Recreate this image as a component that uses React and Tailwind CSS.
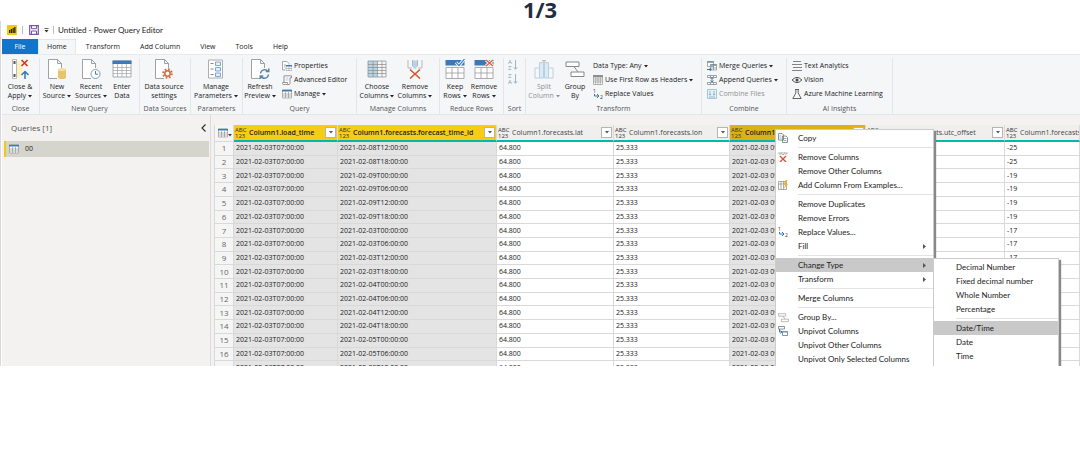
import clsx from 'clsx'

const TABS = ['Home', 'Transform', 'Add Column', 'View', 'Tools', 'Help']

const COLUMNS = [
  { name: 'Column1.load_time', width: 'w-[104px]', selected: true },
  { name: 'Column1.forecasts.forecast_time_id', width: 'w-[159px]', selected: true },
  { name: 'Column1.forecasts.lat', width: 'w-[117px]' },
  { name: 'Column1.forecasts.lon', width: 'w-[116px]' },
  { name: 'Column1.forecasts.local_time', width: 'w-[136px]', selected: true, active: true },
  { name: 'Column1.forecasts.utc_offset', width: 'w-[139px]' },
  { name: 'Column1.forecasts.temperature', width: '' },
]

const FORECASTS = [
  ['02-08T12', -25], ['02-08T18', -25], ['02-09T00', -19], ['02-09T06', -19],
  ['02-09T12', -19], ['02-09T18', -19], ['02-03T00', -17], ['02-03T06', -17],
  ['02-03T12', -17], ['02-03T18', -17], ['02-04T00', -16], ['02-04T06', -16],
  ['02-04T12', -16], ['02-04T18', -16], ['02-05T00', -15], ['02-05T06', -15],
  ['02-05T12', -15],
]

const ROWS = FORECASTS.map(([id, temp]) => [
  '2021-02-03T07:00:00', `2021-${id}:00:00`, '64.800', '25.333', '2021-02-03 09:00:00', '', temp,
])

const TYPES = ['Decimal Number', 'Fixed decimal number', 'Whole Number', 'Percentage', null, 'Date/Time', 'Date', 'Time', 'Date/Time/Timezone']

/* ---------- icons ---------- */

function Icon({ size = 10, children, className }) {
  return (
    <svg
      viewBox={`0 0 ${size} ${size}`}
      width={size}
      height={size}
      fill="none"
      className={clsx('shrink-0', className)}
      aria-hidden="true"
    >
      {children}
    </svg>
  )
}

const PAGE = 'M10 19.5H1.5V.5h9l4 4V9M10.5.5v4h4'

const CloseApplyIcon = () => (
  <Icon size={20}>
    <path d="M2.500.5h4v19h-4z" fill="#fff" stroke="#aaa" strokeWidth=".8" />
    <path d="M3.500 2h2v3h-2zM3.500 15h2v3h-2z" fill="#555" />
    <path d="M7 1l5 3v12l-5 3z" fill="#fbf0c0" />
    <path d="M11.500 1l6 6M17.500 1l-6 6" stroke="#d13b1c" strokeWidth="1.700" />
    <path d="M15 20v-7.500M11.500 16L15 12.500l3.500 3.500" stroke="#3a76b5" strokeWidth="1.500" />
  </Icon>
)
const NewSourceIcon = () => (
  <Icon size={20}>
    <path d={PAGE} fill="#fff" stroke="#8a8a8a" strokeWidth=".8" />
    <path d="M11 10.500v8c0 2 8 2 8 0v-8z" fill="#e6c36c" />
    <ellipse cx="15" cy="10.500" rx="4" ry="1.500" fill="#f3dda0" />
  </Icon>
)
const RecentIcon = () => (
  <Icon size={20}>
    <path d={PAGE} fill="#fff" stroke="#8a8a8a" strokeWidth=".8" />
    <circle cx="14.500" cy="15" r="4.500" fill="#fff" stroke="#7ba0bf" />
    <path d="M14.500 12v3.200h2.500" stroke="#4d7ca5" />
  </Icon>
)
const EnterDataIcon = () => (
  <Icon size={20}>
    <path d="M1 2h18v16H1z" fill="#fff" stroke="#999" strokeWidth=".8" />
    <path d="M.5 1.500h19v3.500H.5z" fill="#3f78b5" />
    <path d="M1 8.500h18M1 11.500h18M1 14.500h18M5.500 5v13M10 5v13M14.500 5v13" stroke="#aaa" strokeWidth=".8" />
  </Icon>
)
const SettingsIcon = () => (
  <Icon size={20}>
    <path d={PAGE} fill="#fff" stroke="#8a8a8a" strokeWidth=".8" />
    <circle cx="13.500" cy="14.500" r="4.300" stroke="#d5693b" strokeWidth="2" strokeDasharray="1.700 1.677" />
    <circle cx="13.500" cy="14.500" r="2.700" fill="#fff" stroke="#d5693b" strokeWidth="1.500" />
  </Icon>
)
const ParametersIcon = () => (
  <Icon size={20}>
    <path d="M2.500 1h14v18h-14z" fill="#fff" stroke="#999" strokeWidth=".8" />
    <path d="M9.500 3h5v3.500h-5zM9.500 8.500h5V12h-5zM9.500 14h5v3.500h-5z" fill="#e3effb" stroke="#6294c6" strokeWidth=".8" />
    <path d="M4.500 4.500h3M4.500 10h3M4.500 15.500h3" stroke="#888" />
  </Icon>
)
const RefreshIcon = () => (
  <Icon size={20}>
    <path d={PAGE} fill="#fff" stroke="#8a8a8a" strokeWidth=".8" />
    <path d="M10.500 14.500c.5-4 5.500-5 7.500-2M18.800 9.500v3h-3M18.500 15.500c-.5 4-5.500 5-7.500 2M10.200 20v-3h3" stroke="#5b87a6" strokeWidth="1.500" />
  </Icon>
)
const ChooseColumnsIcon = () => (
  <Icon size={20}>
    <path d="M1 2h9v16H1z" fill="#b5d6ea" />
    <path d="M1 2h18v16H1zM1 5.500h18M1 8.500h18M1 11.500h18M1 14.500h18M6 2v16M10.500 2v16M15 2v16" stroke="#8a8a8a" strokeWidth=".7" />
  </Icon>
)
const RemoveColumnsIcon = () => (
  <Icon size={20}>
    <path d="M7.500 1.500h5v6l-2.500 3-2.500-3z" fill="#b5d6ea" />
    <path d="M3 1v8h4M17 1v8h-4M7.500 1v6M12.500 1v6" stroke="#aaa" strokeWidth=".8" />
    <path d="M5 10.500l10 9M15 10.500l-10 9" stroke="#d9532c" strokeWidth="1.500" />
  </Icon>
)
const RowsGrid = () => (
  <>
    <path d="M1 8.500h18v11H1zM1 14h18M7 8.500v11M13 8.500v11" stroke="#999" fill="#fff" strokeWidth=".8" />
    <path d="M.5 1h19v5.500H.5z" fill="#3f78b5" />
  </>
)
const KeepRowsIcon = () => (
  <Icon size={20}>
    <RowsGrid />
    <path d="M11 3.500l3 3L19.500 0" stroke="#fff" strokeWidth="3" />
    <path d="M11 3.500l3 3L19.500 0" stroke="#5082ae" strokeWidth="1.200" />
  </Icon>
)
const RemoveRowsIcon = () => (
  <Icon size={20}>
    <RowsGrid />
    <path d="M12 1l7 6M19 1l-7 6" stroke="#fff" strokeWidth="3" />
    <path d="M12 1l7 6M19 1l-7 6" stroke="#d9663f" strokeWidth="1.500" />
  </Icon>
)
const SplitIcon = () => (
  <Icon size={20}>
    <path d="M1 9h4.500v10H1zM14.500 9H19v10h-4.500z" stroke="#b4cddf" fill="#f4f8fb" strokeWidth=".9" />
    <path d="M5.500 3.500H9.500V19h-4zM10.500 3.500h4V19h-4z" stroke="#b4cddf" fill="#dbeaf4" strokeWidth=".9" />
    <path d="M8.500 1L10 2.500 11.500 1" stroke="#888" />
  </Icon>
)
const GroupIcon = ({ size = 20 }) => (
  <svg viewBox="0 0 20 20" width={size} height={size} fill="#fff" className="shrink-0" aria-hidden="true">
    <path d="M1 3h13v4.500H1zM6 13h13v4.500H6z" stroke="#888" />
    <path d="M9 7.500l4 5.500" stroke="#888" />
  </svg>
)
const PowerBiIcon = () => (
  <Icon>
    <path d="M0 0h10v10H0z" fill="#f2c811" />
    <path d="M2 5h1.300v3H2zM3.800 4h1.300v4H3.800zM5.600 3h1.200v5H5.600zM7.200 2h1.300v6H7.200z" fill="#222" />
  </Icon>
)
const SaveIcon = () => (
  <Icon>
    <path d="M.7.7h8.600v8.600H.7z" fill="#fff" stroke="#7b4fa3" strokeWidth="1.200" />
    <path d="M2.500.7h5v3h-5zM2.500 6h5v3.300h-5z" fill="#fff" stroke="#7b4fa3" />
  </Icon>
)
const PropertiesIcon = () => (
  <Icon>
    <path d="M3 9H.5V.5H5l2 2v1" fill="#fff" stroke="#888" strokeWidth=".7" />
    <path d="M2 4h2M2 6h1" stroke="#888" strokeWidth=".7" />
    <path d="M4 4.500h6v5H4z" fill="#fff" stroke="#999" strokeWidth=".6" />
    <path d="M4 4h6v1.500H4z" fill="#3f78b5" />
    <path d="M4 7.500h6M7 5.500v4" stroke="#999" strokeWidth=".6" />
  </Icon>
)
const ScriptIcon = () => (
  <Icon>
    <path d="M2 7V.8h7.500v2H8v5.500c0 1.300-1 1.300-1.500 1.300H1.300C.3 9.600.3 7.500.8 7.500h4.700c0 1 .3 2 1 2" fill="#fff" stroke="#777" strokeWidth=".8" />
    <path d="M3.500 3h3M3.500 5h3" stroke="#aaa" strokeWidth=".7" />
  </Icon>
)
const TableIcon = () => (
  <Icon>
    <path d="M.5 1h9v8h-9zM.5 5h9M.5 7h9M3.500 3v6M6.500 3v6" fill="#fff" stroke="#888" strokeWidth=".6" />
    <path d="M0 .8h10v1.700H0z" fill="#3f78b5" />
  </Icon>
)
const HeadersIcon = () => (
  <Icon>
    <path d="M.5.5h9v9h-9zM.5 3h9M.5 5h9M.5 7h9M2.700.5v9M5 .5v9M7.300.5v9" fill="#fff" stroke="#888" strokeWidth=".6" />
    <path d="M0 0h10v2H0z" fill="#8a8f94" />
  </Icon>
)
const ReplaceIcon = () => (
  <Icon>
    <text x="0" y="4" fontSize="5" fill="#333" fontFamily="Open Sans">1</text>
    <text x="7" y="10" fontSize="5" fill="#333" fontFamily="Open Sans">2</text>
    <path d="M1.500 5v2h4M4 5l2 2-2 2" stroke="#3a76b5" />
  </Icon>
)
const MergeIcon = () => (
  <Icon>
    <path d="M.5.5h6v5h-6zM3.500 3.500h6v5.500h-6zM3.500 7h6M6.500 5v4" fill="#fff" stroke="#888" strokeWidth=".7" />
    <path d="M.2.2h6.500v1.500H.2zM3.200 3.200h6.500v1.500H3.200z" fill="#6f8fae" />
    <path d="M0 8.500h4M2.700 7l1.500 1.500L2.700 10" stroke="#2f79c4" />
  </Icon>
)
const AppendIcon = () => (
  <Icon>
    <path d="M.5.5h9v2h-9zM.5 7.500h9v2h-9zM3.500.5v2M6.500.5v2M3.500 7.500v2M6.500 7.500v2" fill="#fff" stroke="#888" strokeWidth=".8" />
    <path d="M5 2v5M3.500 4L5 2.500 6.500 4M3.500 5.500L5 7l1.500-1.500" stroke="#3a76b5" strokeWidth=".9" />
  </Icon>
)
const CombineIcon = () => (
  <Icon>
    <path d="M.5.5h9v9h-9z" fill="#e6f1f8" stroke="#9bbfd4" strokeWidth=".9" />
    <path d="M3 2v4M2 5l1 1.300L4 5M7 2v4M6 5l1 1.300L8 5M2 8h6" stroke="#7fa9c2" strokeWidth=".8" />
  </Icon>
)
const TextIcon = () => (
  <Icon>
    <path d="M1 .5h8M0 3.500h10M1 6.500h9M0 9.500h10" stroke="#777" strokeWidth=".9" />
  </Icon>
)
const EyeIcon = () => (
  <Icon>
    <path d="M.3 5c2.500-3.300 6.900-3.300 9.400 0-2.500 3.300-6.900 3.300-9.400 0z" stroke="#444" />
    <circle cx="5" cy="5" r="1.500" fill="#444" />
  </Icon>
)
const FlaskIcon = () => (
  <Icon>
    <path d="M3 .5h4M3.800.5v3.500L.8 9.500h8.400L6.200 4V.5" stroke="#555" strokeWidth=".9" />
  </Icon>
)
const SortIcon = ({ top, bottom }) => (
  <Icon size={12}>
    <text x="0" y="5" fontSize="6" fill="#7d9cb0" fontFamily="Open Sans">{top}</text>
    <text x="0" y="11" fontSize="6" fill="#7d9cb0" fontFamily="Open Sans">{bottom}</text>
    <path d="M7.500 1v9M5.800 8.300l1.700 2 1.700-2" stroke="#8fb0c4" strokeWidth=".9" />
  </Icon>
)
const CopyIcon = () => (
  <Icon>
    <path d="M.5.5h3.500l1.500 1.500v5h-5zM4.500 3H8l1.500 1.500v5h-5z" fill="#fff" stroke="#777" strokeWidth=".8" />
    <path d="M5.500 5.500h3M5.500 7.500h3M1.500 3h2M1.500 5h2" stroke="#5d93c0" strokeWidth=".7" />
  </Icon>
)
const MenuRemoveIcon = () => (
  <Icon>
    <path d="M1 0v2h2V0M4 0v2.500h2V0M7 0v2h2V0" stroke="#999" strokeWidth=".7" />
    <path d="M2 4l6 6M8 4l-6 6" stroke="#d9532c" strokeWidth="1.400" />
  </Icon>
)
const ExamplesIcon = () => (
  <Icon>
    <path d="M.5 1.500h8v8h-8zM.5 4h8M3 1.500v8M5.500 1.500v8" fill="#fff" stroke="#888" strokeWidth=".7" />
    <path d="M7.500 0L5 5h2L6 9l4-5H8l1.500-4z" fill="#e8b54a" />
  </Icon>
)
const UnpivotIcon = () => (
  <Icon>
    <path d="M.5.5h6v2.500h-6zM4.500 5.500h5v4h-5z" fill="#fff" stroke="#777" strokeWidth=".8" />
    <path d="M4.200 5h5.600v1.500H4.200z" fill="#6b9ac6" />
    <path d="M1.500 3v3h2M2.500 4.500L4 6 2.500 7.500" stroke="#2f79c4" />
  </Icon>
)

const Caret = () => (
  <svg viewBox="0 0 4 3" width="4" height="3" className="ml-0.5 inline-block align-middle" aria-hidden="true">
    <path d="M0 0h4L2 2.500z" fill="currentColor" />
  </svg>
)

/* ---------- ribbon ---------- */

function BigButton({ icon: I, lines, caret, width, disabled }) {
  return (
    <button
      disabled={disabled}
      className={clsx('flex shrink-0 flex-col items-center whitespace-nowrap leading-[9px]', width, disabled && 'text-[#929292]')}
    >
      <I />
      <span className="mt-[3px]">{lines[0]}</span>
      <span>
        {lines[1]}
        {caret && <Caret />}
      </span>
    </button>
  )
}

function SmallButton({ icon: I, label, caret, disabled }) {
  return (
    <button
      disabled={disabled}
      className={clsx('flex h-[14px] items-center whitespace-nowrap', disabled && 'text-[#929292]')}
    >
      {I && <span className="mr-0.5"><I /></span>}
      {label}
      {caret && <Caret />}
    </button>
  )
}

function Group({ label, width, children }) {
  return (
    <div className={clsx('flex shrink-0 flex-col border-r border-[#e3e5e8]', width)}>
      <div className="flex flex-1 pt-px">{children}</div>
      <p className="whitespace-nowrap text-center leading-[10px] text-[#555]">{label}</p>
    </div>
  )
}

function SmallList({ children }) {
  return <div className="flex flex-col items-start pl-[5px]">{children}</div>
}

function Ribbon() {
  return (
    <div className="flex h-[61px] border-y border-t-[#e9e9e9] border-b-[#dfe8ea] bg-[#f4f6f8] pt-[3px]">
      <Group label="Close" width="w-[38px]">
        <BigButton icon={CloseApplyIcon} lines={['Close &', 'Apply']} caret width="w-[36px]" />
      </Group>
      <Group label="New Query" width="w-[100px]">
        <BigButton icon={NewSourceIcon} lines={['New', 'Source']} caret width="w-[34px]" />
        <BigButton icon={RecentIcon} lines={['Recent', 'Sources']} caret width="w-[34px]" />
        <BigButton icon={EnterDataIcon} lines={['Enter', 'Data']} width="w-[28px]" />
      </Group>
      <Group label="Data Sources" width="w-[51px]">
        <BigButton icon={SettingsIcon} lines={['Data source', 'settings']} width="w-[48px]" />
      </Group>
      <Group label="Parameters" width="w-[52px]">
        <BigButton icon={ParametersIcon} lines={['Manage', 'Parameters']} caret width="w-[50px]" />
      </Group>
      <Group label="Query" width="w-[114px]">
        <BigButton icon={RefreshIcon} lines={['Refresh', 'Preview']} caret width="w-[34px]" />
        <SmallList>
          <SmallButton icon={PropertiesIcon} label="Properties" />
          <SmallButton icon={ScriptIcon} label="Advanced Editor" />
          <SmallButton icon={TableIcon} label="Manage" caret />
        </SmallList>
      </Group>
      <Group label="Manage Columns" width="w-[83px]">
        <BigButton icon={ChooseColumnsIcon} lines={['Choose', 'Columns']} caret width="w-[40px]" />
        <BigButton icon={RemoveColumnsIcon} lines={['Remove', 'Columns']} caret width="w-[36px]" />
      </Group>
      <Group label="Reduce Rows" width="w-[64px]">
        <BigButton icon={KeepRowsIcon} lines={['Keep', 'Rows']} caret width="w-[30px]" />
        <BigButton icon={RemoveRowsIcon} lines={['Remove', 'Rows']} caret width="w-[28px]" />
      </Group>
      <Group label="Sort" width="w-[22px]">
        <div className="flex flex-col gap-0.5 pl-1">
          <button disabled aria-label="Sort ascending"><SortIcon top="A" bottom="Z" /></button>
          <button disabled aria-label="Sort descending"><SortIcon top="Z" bottom="A" /></button>
        </div>
      </Group>
      <Group label="Transform" width="w-[176px]">
        <BigButton icon={SplitIcon} lines={['Split', 'Column']} caret disabled width="w-[36px]" />
        <BigButton icon={GroupIcon} lines={['Group', 'By']} width="w-[26px]" />
        <SmallList>
          <SmallButton label="Data Type: Any" caret />
          <SmallButton icon={HeadersIcon} label="Use First Row as Headers" caret />
          <SmallButton icon={ReplaceIcon} label="Replace Values" />
        </SmallList>
      </Group>
      <Group label="Combine" width="w-[85px]">
        <SmallList>
          <SmallButton icon={MergeIcon} label="Merge Queries" caret />
          <SmallButton icon={AppendIcon} label="Append Queries" caret />
          <SmallButton icon={CombineIcon} label="Combine Files" disabled />
        </SmallList>
      </Group>
      <Group label="AI Insights" width="w-[106px]">
        <SmallList>
          <SmallButton icon={TextIcon} label="Text Analytics" />
          <SmallButton icon={EyeIcon} label="Vision" />
          <SmallButton icon={FlaskIcon} label="Azure Machine Learning" />
        </SmallList>
      </Group>
    </div>
  )
}

/* ---------- data grid ---------- */

function HeaderCell({ col }) {
  return (
    <th
      className={clsx(
        'h-[17px] overflow-hidden border-r border-b-2 border-r-[#d9d9d9] border-b-[#01b8aa] p-0 text-left',
        col.width,
        col.active ? 'bg-[#dbb116]' : col.selected ? 'bg-[#f6cc14]' : 'bg-[#f0efee]',
        col.selected ? 'font-semibold text-[#222]' : 'font-normal text-[#444]'
      )}
    >
      <div className="flex items-center pr-px pl-px">
        <span className="w-[14px] shrink-0 text-[6px] leading-[6px] font-normal text-[#333]">
          ABC<br />123
        </span>
        <span className="flex-1 whitespace-nowrap">{col.name}</span>
        <button aria-label={`Filter ${col.name}`} className="flex h-[11px] w-[11px] items-center justify-center border border-[#b5b5b5] bg-white">
          <svg viewBox="0 0 4 3" width="4" height="3"><path d="M0 0h4L2 2.500z" fill="#555" /></svg>
        </button>
      </div>
    </th>
  )
}

function DataGrid() {
  return (
    <table className="h-[250px] w-full table-fixed border-separate border-spacing-0 border-l border-[#d9d9d9]">
      <thead>
        <tr>
          <th className="h-[17px] w-[19px] border-r border-b border-[#d9d9d9] bg-[#f5f5f5] p-0">
            <button aria-label="Table options" className="flex items-center pl-[3px]">
              <TableIcon />
              <svg viewBox="0 0 4 3" width="4" height="3" className="mt-1"><path d="M0 0h4L2 2.500z" fill="#444" /></svg>
            </button>
          </th>
          {COLUMNS.map((col) => <HeaderCell key={col.name} col={col} />)}
        </tr>
      </thead>
      <tbody>
        {ROWS.map((row, i) => (
          <tr key={i}>
            <td className="border-r border-b border-[#d9d9d9] bg-[#f5f5f5] p-0 text-center text-[8px] leading-[10px] text-[#666]">{i + 1}</td>
            {row.map((value, c) => (
              <td
                key={c}
                className={clsx(
                  'border-r border-b border-[#d9d9d9] p-0 pl-0.5 leading-[10px] whitespace-nowrap text-[#222]',
                  COLUMNS[c].selected ? 'bg-[#e4e4e4]' : 'bg-white'
                )}
              >
                {value}
              </td>
            ))}
          </tr>
        ))}
      </tbody>
    </table>
  )
}

/* ---------- context menu ---------- */

function MenuItem({ icon: I, label, arrow, active, children }) {
  return (
    <li className="relative">
      <button className={clsx('flex h-[14px] w-full items-center whitespace-nowrap', active && 'bg-[#c9c9c9]')}>
        <span className="w-[22px] shrink-0 pl-0.5">{I && <I />}</span>
        <span className="flex-1 text-left">{label}</span>
        {arrow && (
          <svg viewBox="0 0 3 5" width="3" height="5" className="mr-[7px]"><path d="M0 0l3 2.500L0 5z" fill="#555" /></svg>
        )}
      </button>
      {children}
    </li>
  )
}

const Separator = () => <li className="my-0.5 ml-[22px] h-px bg-[#e3e3e3]" role="separator" />

function TypeMenu() {
  return (
    <ul className="absolute top-0 left-full w-[126px] border border-[#ccc] bg-white pt-px pb-1 shadow-[2px_2px_1px_#888]">
      {TYPES.map((type, i) =>
        type ? <MenuItem key={type} label={type} active={type === 'Date/Time'} /> : <Separator key={i} />
      )}
    </ul>
  )
}

function ContextMenu() {
  return (
    <ul className="absolute top-[14px] left-[564px] w-[159px] border border-[#ccc] bg-white pt-px font-['Lato','Open_Sans',sans-serif] text-[8px] text-[#222] shadow-[2px_2px_1px_#888]">
      <MenuItem icon={CopyIcon} label="Copy" />
      <Separator />
      <MenuItem icon={MenuRemoveIcon} label="Remove Columns" />
      <MenuItem label="Remove Other Columns" />
      <MenuItem icon={ExamplesIcon} label="Add Column From Examples..." />
      <Separator />
      <MenuItem label="Remove Duplicates" />
      <MenuItem label="Remove Errors" />
      <MenuItem icon={ReplaceIcon} label="Replace Values..." />
      <MenuItem label="Fill" arrow />
      <Separator />
      <MenuItem label="Change Type" arrow active>
        <TypeMenu />
      </MenuItem>
      <MenuItem label="Transform" arrow />
      <Separator />
      <MenuItem label="Merge Columns" />
      <Separator />
      <MenuItem icon={() => <GroupIcon size={11} />} label="Group By..." />
      <MenuItem icon={UnpivotIcon} label="Unpivot Columns" />
      <MenuItem label="Unpivot Other Columns" />
      <MenuItem label="Unpivot Only Selected Columns" />
      <Separator />
    </ul>
  )
}

export default function App() {
  return (
    <main className="bg-white font-['Open_Sans','Noto_Sans',sans-serif]">
      <h1 className="h-[21px] text-center text-[22px] leading-[18px] font-bold text-[#232c40]">1/3</h1>

      <section className="flex aspect-[1080/345] flex-col overflow-hidden border-l border-[#d8d8dc] pl-px text-[7px] leading-[10px] text-[#222]">
        {/* Title bar */}
        <header className="flex h-[18px] shrink-0 items-center pl-[5px]">
          <PowerBiIcon />
          <span className="mx-[5px] h-2 w-px bg-[#bbb]" />
          <button aria-label="Save" className="ml-px"><SaveIcon /></button>
          <button aria-label="Customize toolbar" className="ml-[5px]">
            <svg viewBox="0 0 5 5" width="5" height="5"><path d="M.5 0h4v.8h-4zM.5 2h4l-2 2.500z" fill="#333" /></svg>
          </button>
          <span className="mx-1 h-2 w-px bg-[#bbb]" />
          <span className="font-['Lato','Open_Sans',sans-serif] text-[8px]">Untitled - Power Query Editor</span>
        </header>

        {/* Tabs */}
        <nav className="flex h-[15px] shrink-0">
          <button className="w-9 bg-[#1374cc] text-white">File</button>
          {TABS.map((tab) => (
            <button
              key={tab}
              className={tab === 'Home' ? 'border-x border-t border-[#e3e5e8] bg-[#f4f6f8] px-2' : 'px-2.5'}
            >
              {tab}
            </button>
          ))}
        </nav>
        <Ribbon />

        {/* Workspace */}
        <div className="flex min-h-0 flex-1 bg-[#f3f2f1]">
          <aside className="w-[209px] shrink-0 border-r border-[#dcdcdc]">
            <div className="flex h-[26px] items-center justify-between pr-1 pl-[9px]">
              <h2 className="text-[8px] text-[#555]">Queries [1]</h2>
              <button aria-label="Collapse queries">
                <svg viewBox="0 0 5 8" width="5" height="8" fill="none"><path d="M4.500.5L1 4l3.500 3.500" stroke="#333" strokeWidth="1.200" /></svg>
              </button>
            </div>
            <button className="ml-0.5 flex h-4 w-[205px] items-center gap-1.5 border-l-2 border-[#f2c811] bg-[#d6d5cd] pl-[3px]">
              <TableIcon />
              00
            </button>
          </aside>

          <div className="relative min-w-0 flex-1 pt-[10px] pl-[3px]">
            <DataGrid />
            <ContextMenu />
          </div>
        </div>
      </section>
    </main>
  )
}
